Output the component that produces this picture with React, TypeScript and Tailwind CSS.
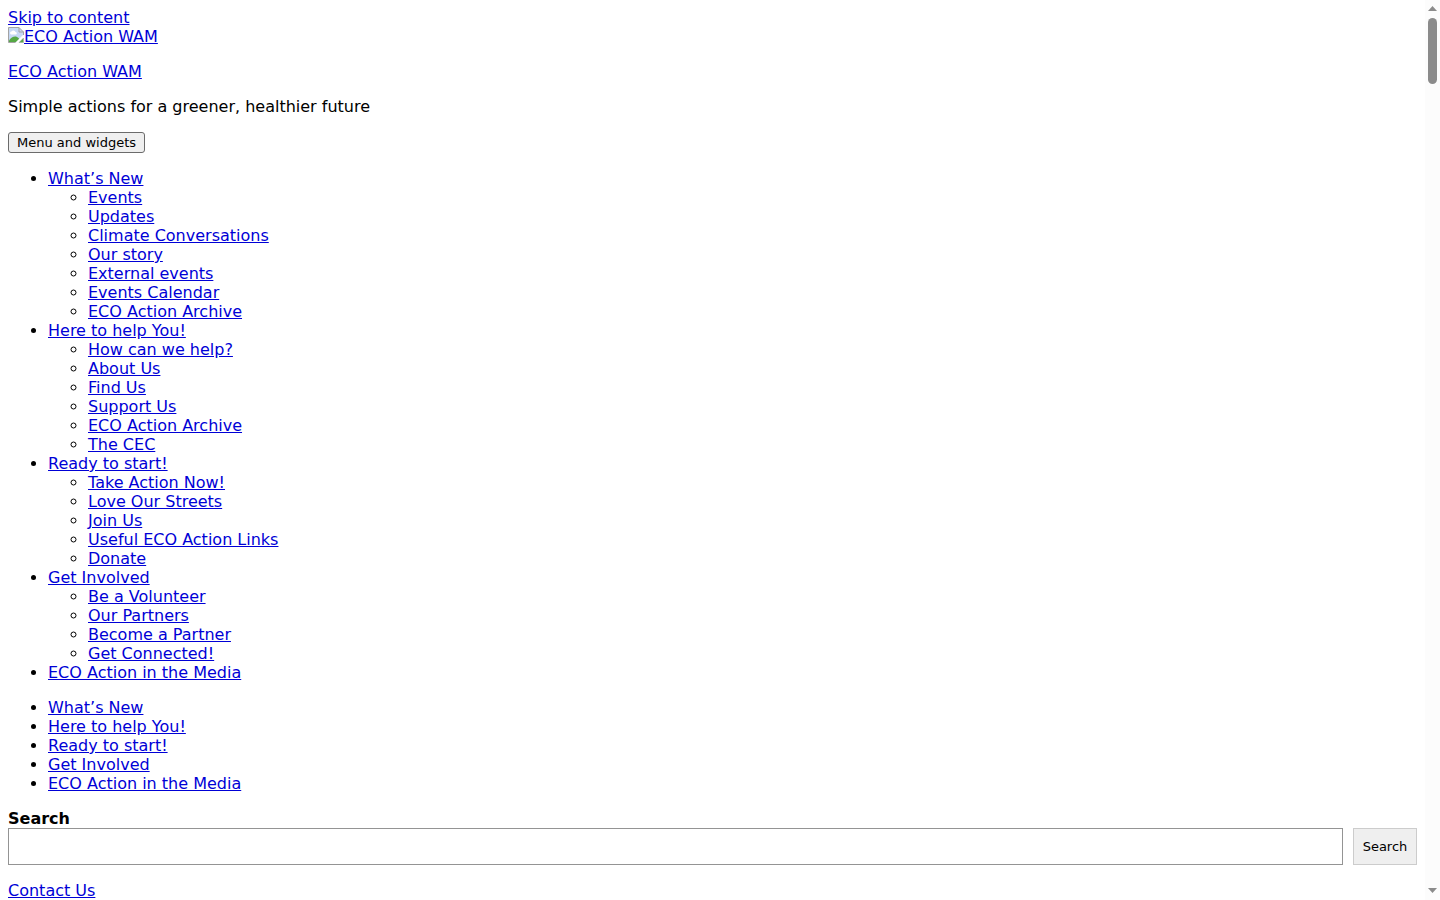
type MenuItem = {
  label: string
  children?: string[]
}

const menu: MenuItem[] = [
  {
    label: 'What’s New',
    children: [
      'Events',
      'Updates',
      'Climate Conversations',
      'Our story',
      'External events',
      'Events Calendar',
      'ECO Action Archive',
    ],
  },
  {
    label: 'Here to help You!',
    children: ['How can we help?', 'About Us', 'Find Us', 'Support Us', 'ECO Action Archive', 'The CEC'],
  },
  {
    label: 'Ready to start!',
    children: ['Take Action Now!', 'Love Our Streets', 'Join Us', 'Useful ECO Action Links', 'Donate'],
  },
  {
    label: 'Get Involved',
    children: ['Be a Volunteer', 'Our Partners', 'Become a Partner', 'Get Connected!'],
  },
  { label: 'ECO Action in the Media' },
]

function TextLink({ children }: { children: React.ReactNode }) {
  return (
    <a href="#" className="text-[#0000d6] underline">
      {children}
    </a>
  )
}

function MissingImageIcon() {
  return (
    <svg viewBox="0 0 16 16" className="inline-block h-4 w-4 align-top" aria-hidden="true">
      <path d="M.5 .5H11L15.5 5V8L8 15.5H.5Z" fill="#c6d8f5" />
      <path d="M3 7.5a1.5 1.5 0 0 1 .5-2.9a2.2 2.2 0 0 1 4 .4a1.3 1.3 0 0 1 .5 2.5Z" fill="#fff" />
      <path d="M1 15V13.5Q4 9 8 9.5Q10 10 11.5 12L8.5 15Z" fill="#55a845" />
      <path d="M7.5 15.5L15.5 7.5V10L10 15.5Z" fill="#fff" />
      <path d="M.5 15.5V.5H11L15.5 5V8M.5 15.5H7.5M11 .5V5H15.5" fill="none" stroke="#a3a3a3" />
      <path d="M15.5 11V15.5H11Z" fill="#55a845" stroke="#a3a3a3" strokeWidth=".5" />
    </svg>
  )
}

function Header() {
  return (
    <header>
      <div>
        <TextLink>Skip to content</TextLink>
      </div>
      <div className="mb-4">
        <TextLink>
          <MissingImageIcon />
          ECO Action WAM
        </TextLink>
      </div>
      <p className="mb-4">
        <TextLink>ECO Action WAM</TextLink>
      </p>
      <p className="mb-4">Simple actions for a greener, healthier future</p>
      <button
        type="button"
        className="mb-4 block rounded-[3px] border border-[#6b6b6b] bg-[#efefef] px-2 text-[13px] leading-[19px]"
      >
        Menu and widgets
      </button>
    </header>
  )
}

function MainMenu() {
  return (
    <nav aria-label="Main menu">
      <ul className="mb-4 list-disc pl-10">
        {menu.map((item) => (
          <li key={item.label}>
            <TextLink>{item.label}</TextLink>
            {item.children && (
              <ul className="list-[circle] pl-10">
                {item.children.map((child) => (
                  <li key={child}>
                    <TextLink>{child}</TextLink>
                  </li>
                ))}
              </ul>
            )}
          </li>
        ))}
      </ul>
    </nav>
  )
}

function SectionMenu() {
  return (
    <nav aria-label="Sections">
      <ul className="mb-4 list-disc pl-10">
        {menu.map((item) => (
          <li key={item.label}>
            <TextLink>{item.label}</TextLink>
          </li>
        ))}
      </ul>
    </nav>
  )
}

function SearchForm() {
  return (
    <form className="mb-4" onSubmit={(e) => e.preventDefault()}>
      <label htmlFor="search" className="block font-bold">
        Search
      </label>
      <div className="flex gap-[10px]">
        <input id="search" type="search" className="min-w-0 flex-1 border border-[#949494] bg-white px-2" />
        <button
          type="submit"
          className="w-16 border border-[#cccccc] bg-[#efefef] text-center text-[13px] leading-[35px]"
        >
          Search
        </button>
      </div>
    </form>
  )
}

function ScrollRail() {
  return (
    <div className="flex w-[15px] flex-col items-center bg-[#fcfcfc] pt-[6px] pb-[7px]" aria-hidden="true">
      <svg viewBox="0 0 9 5" className="h-[5px] w-[9px]">
        <path d="M0 5L4.5 0L9 5Z" fill="#8b8b8b" />
      </svg>
      <div className="mt-[7px] h-[66px] w-[9px] rounded-full bg-[#8b8b8b]" />
      <svg viewBox="0 0 9 5" className="mt-auto h-[5px] w-[9px]">
        <path d="M0 0H9L4.5 5Z" fill="#8b8b8b" />
      </svg>
    </div>
  )
}

export default function App() {
  return (
    <div className="flex min-h-screen bg-white font-['DejaVu_Sans',sans-serif] text-[16px] leading-[19px] text-black">
      <div className="min-w-0 flex-1 px-2 pt-2">
        <Header />
        <MainMenu />
        <SectionMenu />
        <SearchForm />
        <TextLink>Contact Us</TextLink>
      </div>
      <ScrollRail />
    </div>
  )
}
